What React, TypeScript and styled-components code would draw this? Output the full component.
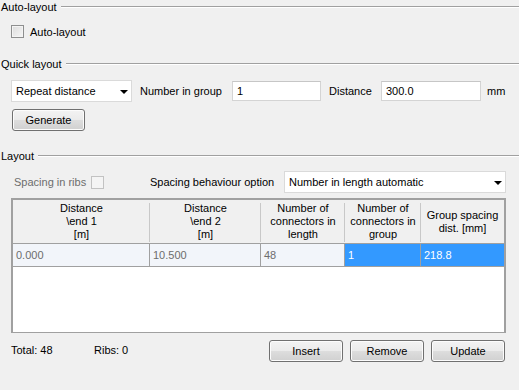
import styled, { createGlobalStyle } from 'styled-components';

const GlobalStyle = createGlobalStyle`
	html, body {
		margin: 0;
		padding: 0;
		background: #f0f0f0;
	}
	* {
		box-sizing: border-box;
	}
`;

const Page = styled.div`
	width: 519px;
	height: 390px;
	overflow: hidden;
	background: #f0f0f0;
	font-family: "Liberation Sans", Arial, sans-serif;
	font-size: 11px;
	color: #000;
`;

const GroupTitle = styled.div<{ $top: number }>`
	display: flex;
	align-items: center;
	gap: 4px;
	height: 14px;
	line-height: 14px;
	margin-top: ${(p) => p.$top}px;
	padding-left: 1px;

	&::after {
		content: '';
		flex: 1;
		height: 0;
		border-top: 1px solid #a0a0a0;
		border-bottom: 1px solid #ffffff;
	}
`;

const Row = styled.div<{ $top: number; $left: number }>`
	display: flex;
	align-items: center;
	margin-top: ${(p) => p.$top}px;
	padding-left: ${(p) => p.$left}px;
`;

const CheckBox = styled.span<{ $disabled?: boolean }>`
	display: inline-block;
	width: 13px;
	height: 13px;
	border: 1px solid ${(p) => (p.$disabled ? '#c2c2c2' : '#8e8f8f')};
	background: ${(p) =>
		p.$disabled
			? '#f4f4f4'
			: 'linear-gradient(135deg, #dcdcdc 0%, #f6f6f6 100%)'};
	box-shadow: inset 0 0 0 1px ${(p) => (p.$disabled ? '#f4f4f4' : '#f4f4f4')};
`;

const Label = styled.span<{ $width?: number; $gap?: number; $muted?: boolean }>`
	display: inline-block;
	white-space: nowrap;
	${(p) => (p.$width ? `width: ${p.$width}px;` : '')}
	margin-left: ${(p) => p.$gap ?? 0}px;
	color: ${(p) => (p.$muted ? '#6d6d6d' : '#000')};
`;

const Combo = styled.div<{ $width: number }>`
	position: relative;
	width: ${(p) => p.$width}px;
	height: 22px;
	line-height: 20px;
	padding-left: 4px;
	background: #fff;
	border: 1px solid #dadada;

	&::after {
		content: '';
		position: absolute;
		right: 3px;
		top: 9px;
		border-left: 4px solid transparent;
		border-right: 4px solid transparent;
		border-top: 4px solid #000;
	}
`;

const TextInput = styled.div<{ $width: number }>`
	width: ${(p) => p.$width}px;
	height: 20px;
	line-height: 18px;
	padding-left: 4px;
	background: #fff;
	border: 1px solid #d4d4d4;
	border-top-color: #c6c6c6;
`;

const Button = styled.div<{ $width: number }>`
	width: ${(p) => p.$width}px;
	height: 22px;
	line-height: 20px;
	text-align: center;
	border: 1px solid #707070;
	border-radius: 3px;
	background: linear-gradient(#f3f3f3 0%, #ebebeb 48%, #dddddd 52%, #d0d0d0 100%);
	box-shadow: inset 0 0 0 1px #fcfcfc;
`;

const Table = styled.div`
	margin-top: 5px;
	margin-left: 11px;
	width: 495px;
	height: 135px;
	background: #fff;
	border: 1px solid #a0a0a0;
	border-top-width: 2px;
	border-left-width: 2px;
	border-right-width: 2px;
	display: grid;
	grid-template-columns: 137px 111px 84px 76px 1fr;
	grid-template-rows: 44px 23px;
	align-content: start;
`;

const HeaderCell = styled.div<{ $last?: boolean }>`
	position: relative;
	display: flex;
	align-items: center;
	justify-content: center;
	text-align: center;
	line-height: 13px;
	color: #000;
	background: #f0f0f0;
	border-bottom: 1px solid #a0a0a0;

	&::after {
		content: '';
		display: ${(p) => (p.$last ? 'none' : 'block')};
		position: absolute;
		right: 0;
		top: 3px;
		bottom: 1px;
		border-right: 1px solid #c8c8c8;
	}
`;

const Cell = styled.div<{ $selected?: boolean }>`
	height: 23px;
	line-height: 22px;
	padding-left: 3px;
	border-right: 1px solid #a0a0a0;
	border-bottom: 1px solid #a0a0a0;
	background: ${(p) => (p.$selected ? '#3399ff' : '#f2f5fa')};
	color: ${(p) => (p.$selected ? '#fff' : '#6d6d6d')};

	&:last-child {
		border-right: none;
	}
`;

const Footer = styled.div`
	display: flex;
	align-items: flex-start;
	margin-top: 7px;
	padding-left: 11px;
	padding-right: 14px;
`;

const FooterText = styled.span<{ $width: number }>`
	display: inline-block;
	width: ${(p) => p.$width}px;
	padding-top: 3px;
	line-height: 14px;
`;

const ButtonGroup = styled.div`
	display: flex;
	gap: 7px;
	margin-left: auto;
`;

const headers = [
	['Distance', '\\end 1', '[m]'],
	['Distance', '\\end 2', '[m]'],
	['Number of', 'connectors in', 'length'],
	['Number of', 'connectors in', 'group'],
	['Group spacing', 'dist. [mm]'],
];

const rows = [
	{ text: '0.000', selected: false },
	{ text: '10.500', selected: false },
	{ text: '48', selected: false },
	{ text: '1', selected: true },
	{ text: '218.8', selected: true },
];

export default function App() {
	return (
		<Page>
			<GlobalStyle />
			<GroupTitle $top={0}>Auto-layout</GroupTitle>
			<Row $top={11} $left={11}>
				<CheckBox />
				<Label $gap={6}>Auto-layout</Label>
			</Row>

			<GroupTitle $top={19}>Quick layout</GroupTitle>
			<Row $top={9} $left={11}>
				<Combo $width={121}>Repeat distance</Combo>
				<Label $gap={8} $width={92}>Number in group</Label>
				<TextInput $width={89}>1</TextInput>
				<Label $gap={8} $width={52}>Distance</Label>
				<TextInput $width={100}>300.0</TextInput>
				<Label $gap={6}>mm</Label>
			</Row>
			<Row $top={7} $left={12}>
				<Button $width={73}>Generate</Button>
			</Row>

			<GroupTitle $top={18}>Layout</GroupTitle>
			<Row $top={8} $left={14}>
				<Label $width={77} $muted>Spacing in ribs</Label>
				<CheckBox $disabled />
				<Label $gap={46} $width={134}>Spacing behaviour option</Label>
				<Combo $width={222}>Number in length automatic</Combo>
			</Row>

			<Table>
				{headers.map((lines, i) => (
					<HeaderCell key={i} $last={i === headers.length - 1}>
						<div>
							{lines.map((l) => (
								<div key={l}>{l}</div>
							))}
						</div>
					</HeaderCell>
				))}
				{rows.map((c, i) => (
					<Cell key={i} $selected={c.selected}>
						{c.text}
					</Cell>
				))}
			</Table>

			<Footer>
				<FooterText $width={83}>Total: 48</FooterText>
				<FooterText $width={60}>Ribs: 0</FooterText>
				<ButtonGroup>
					<Button $width={74}>Insert</Button>
					<Button $width={74}>Remove</Button>
					<Button $width={74}>Update</Button>
				</ButtonGroup>
			</Footer>
		</Page>
	);
}
